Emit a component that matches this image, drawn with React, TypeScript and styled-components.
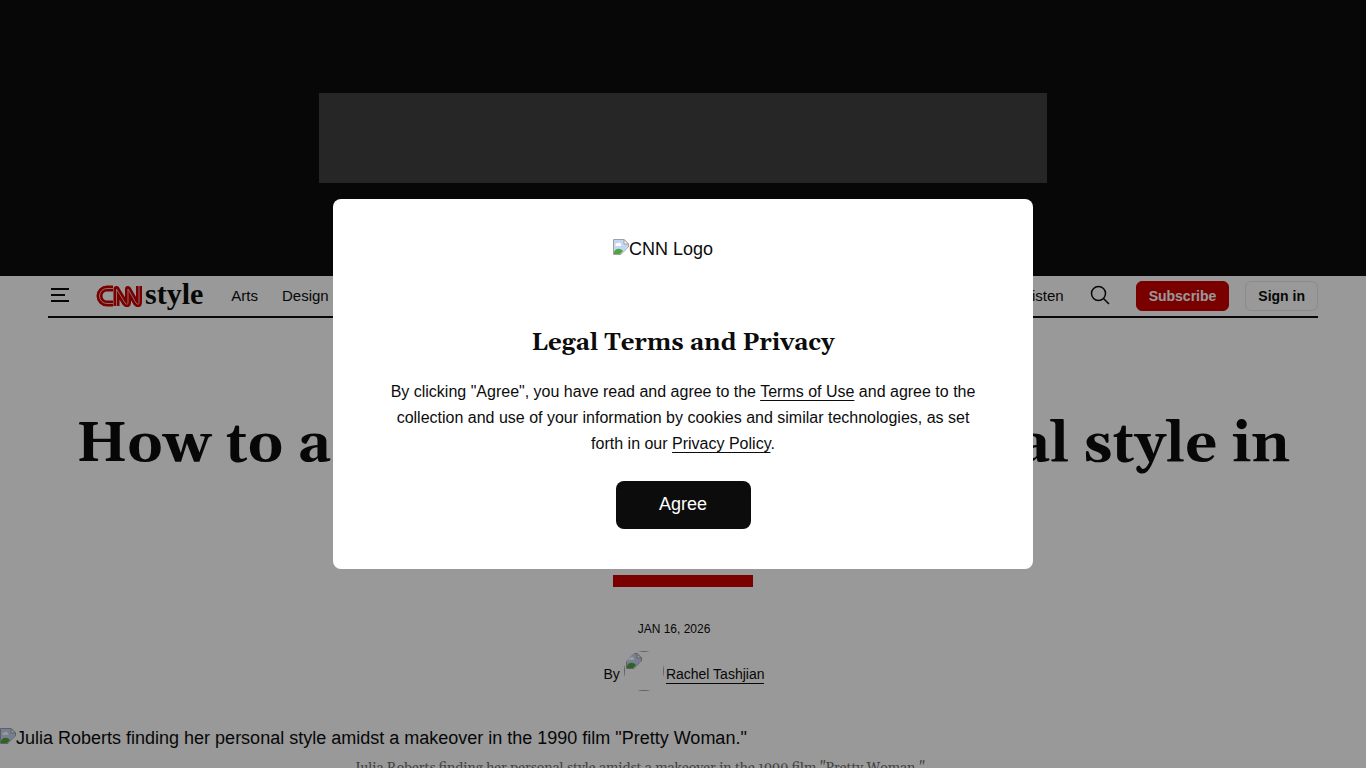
import React from "react";
import styled, { createGlobalStyle } from "styled-components";

const sans = `"Liberation Sans", Arial, Helvetica, sans-serif`;
const serif = `Georgia, Gelasio, "Liberation Serif", serif`;

const GlobalStyle = createGlobalStyle`
  *, *::before, *::after { box-sizing: border-box; }
  body {
    margin: 0;
    background: #fff;
    color: #0c0c0c;
    font-family: ${sans};
    font-size: 18px;
  }
`;

const Page = styled.div`
  height: 100vh;
  overflow: hidden;
`;

const AdBanner = styled.aside`
  display: flex;
  align-items: center;
  justify-content: center;
  height: 276px;
  background: #0c0c0c;
`;

const AdSlot = styled.div`
  width: 728px;
  height: 90px;
  background: #404040;
`;

const Header = styled.header`
  display: flex;
  align-items: center;
  height: 42px;
  margin: 0 48px;
  border-bottom: 2px solid #0c0c0c;
`;

const IconButton = styled.button`
  display: flex;
  padding: 0;
  border: 0;
  background: none;
  color: #0c0c0c;
  cursor: pointer;
`;

const Brand = styled.a`
  display: flex;
  align-items: center;
  gap: 3px;
  margin: 0 28px 0 24px;
  color: #0c0c0c;
  text-decoration: none;
`;

const BrandName = styled.span`
  padding-bottom: 4px;
  font: bold 30px/34px "Liberation Serif", serif;
`;

const Nav = styled.nav`
  display: flex;
  flex: 1;
  gap: 24px;
  min-width: 0;
`;

const NavLink = styled.a<{ $end?: boolean }>`
  margin-left: ${(p) => (p.$end ? "auto" : "0")};
  color: #0c0c0c;
  font-size: 15px;
  line-height: 20px;
  text-decoration: none;
`;

const Actions = styled.div`
  display: flex;
  align-items: center;
  gap: 16px;
  margin-left: 24px;
`;

const SearchButton = styled(IconButton)`
  margin-right: 8px;
`;

const AccountButton = styled.button<{ $primary?: boolean }>`
  height: 30px;
  padding: 0 12px;
  border: 1px solid ${(p) => (p.$primary ? "#cc0000" : "#e6e6e6")};
  border-radius: 6px;
  background: ${(p) => (p.$primary ? "#cc0000" : "#fff")};
  color: ${(p) => (p.$primary ? "#fff" : "#0c0c0c")};
  font: bold 14px/20px ${sans};
  white-space: nowrap;
  cursor: pointer;
`;

const Article = styled.article`
  display: flex;
  flex-direction: column;
  align-items: center;
  padding-top: 92px;
`;

const Headline = styled.h1`
  margin: 0;
  padding: 0 48px;
  font: bold 56px/70px ${serif};
  text-align: center;
`;

const Rule = styled.div`
  width: 140px;
  height: 12px;
  margin-top: 25px;
  background: #cc0000;
`;

const Dateline = styled.time`
  margin-top: 34px;
  padding-right: 18px;
  font-size: 12px;
  line-height: 16px;
  text-transform: uppercase;
`;

const Byline = styled.div`
  display: flex;
  align-items: center;
  margin-top: 14px;
  padding-left: 2px;
  font-size: 14px;
  line-height: 18px;
`;

const Avatar = styled.span`
  width: 40px;
  height: 40px;
  margin: 0 2px 0 4px;
  overflow: hidden;
  border-radius: 50%;
`;

const AvatarFrame = styled.span`
  display: block;
  height: 100%;
  padding: 1px;
  border: 1px solid #a0a0a0;
`;

const BylineText = styled.span`
  margin-top: 6px;
`;

const AuthorLink = styled.a`
  margin-top: 6px;
  border-bottom: 1px solid #0c0c0c;
  color: #0c0c0c;
  text-decoration: none;
`;

const Figure = styled.figure`
  align-self: stretch;
  margin: 37px 0 0;
`;

const Missing = styled.div`
  display: flex;
  align-items: flex-start;
  line-height: 21px;
  white-space: nowrap;
`;

const Caption = styled.figcaption`
  max-width: 660px;
  margin: 9px auto 0;
  color: #6e6e6e;
  font: 14px/20px ${serif};
`;

const Overlay = styled.div`
  position: fixed;
  inset: 0;
  display: flex;
  align-items: center;
  justify-content: center;
  background: rgba(0, 0, 0, 0.4);
`;

const Dialog = styled.section`
  display: flex;
  flex-direction: column;
  align-items: center;
  width: 700px;
  max-width: 100%;
  padding: 40px 50px;
  border-radius: 8px;
  background: #fff;
`;

const DialogLogo = styled.div`
  width: 140px;
  height: 63px;
`;

const DialogTitle = styled.h2`
  margin: 25px 0 20px;
  font: bold 24px/32px ${serif};
`;

const DialogText = styled.p`
  margin: 0 0 24px;
  font-size: 16px;
  line-height: 26px;
  text-align: center;

  a {
    color: #0c0c0c;
    text-decoration: underline;
    text-decoration-thickness: 1px;
    text-decoration-skip-ink: none;
    text-underline-offset: 3px;
  }
`;

const AgreeButton = styled.button`
  width: 135px;
  height: 48px;
  padding: 0 0 2px;
  border: 0;
  border-radius: 8px;
  background: #0c0c0c;
  color: #fff;
  font: 18px/24px ${sans};
  cursor: pointer;
`;

const BrokenImage = () => (
  <svg width="16" height="16" viewBox="0 0 16 16" aria-hidden="true">
    <path d="M.5 15.5V.5H11L15.5 5V8L8 15.5Z" fill="#c4d6f4" stroke="#a0a0a0" />
    <path d="M11 .5V5h4.5Z" fill="#fff" stroke="#a0a0a0" />
    <path d="M2.5 6.5a1.5 1.5 0 0 1 2-2 2 2 0 0 1 3.500 1 1 1 0 0 1 0 1.500H3Z" fill="#fff" />
    <path d="M1 15v-2c2-4 6-4 9-1l-3 3Z" fill="#4fa53a" />
    <path d="M8 16 16 8v3l-5 5Z" fill="#fff" />
  </svg>
);

const worm = "M17 3.500H11A7.500 7.500 0 0 0 11 18.500H17M20.500 21V4L29 18Q32 21 32 17V4L40 18Q43 21 43 17V1";

const CnnMark = () => (
  <svg width="46" height="22" viewBox="0 0 46 22" aria-label="CNN" role="img">
    <g fill="none" strokeLinejoin="round">
      <path d={worm} stroke="#cc0000" strokeWidth="6" />
      <path d={worm} stroke="#f0b4b4" strokeWidth="1" />
    </g>
  </svg>
);

export default function App() {
  return (
    <>
      <GlobalStyle />
      <Page>
        <AdBanner aria-label="Advertisement">
          <AdSlot />
        </AdBanner>
        <Header>
          <IconButton aria-label="Open menu">
            <svg width="24" height="24" viewBox="0 0 24 24" fill="none" stroke="currentColor" strokeWidth="2">
              <path d="M3 5H21M3 11H17M3 17H21" />
            </svg>
          </IconButton>
          <Brand href="#">
            <CnnMark />
            <BrandName>style</BrandName>
          </Brand>
          <Nav>
            <NavLink href="#">Arts</NavLink>
            <NavLink href="#">Design</NavLink>
            <NavLink href="#" $end>
              Listen
            </NavLink>
          </Nav>
          <Actions>
            <SearchButton aria-label="Search">
              <svg width="24" height="24" viewBox="0 0 24 24" fill="none" stroke="currentColor" strokeWidth="1.5">
                <circle cx="10.500" cy="9.500" r="7" />
                <path d="M15.500 14.500 21 20" />
              </svg>
            </SearchButton>
            <AccountButton $primary>Subscribe</AccountButton>
            <AccountButton>Sign in</AccountButton>
          </Actions>
        </Header>
        <Article>
          <Headline>How to actually find your personal style in 2026</Headline>
          <Rule />
          <Dateline dateTime="2026-01-16">Jan 16, 2026</Dateline>
          <Byline>
            <BylineText>By</BylineText>
            <Avatar>
              <AvatarFrame>
                <BrokenImage />
              </AvatarFrame>
            </Avatar>
            <AuthorLink href="#">Rachel Tashjian</AuthorLink>
          </Byline>
          <Figure>
            <Missing>
              <BrokenImage />
              Julia Roberts finding her personal style amidst a makeover in the 1990 film "Pretty Woman."
            </Missing>
            <Caption>
              Julia Roberts finding her personal style amidst a makeover in the 1990 film "Pretty Woman."
            </Caption>
          </Figure>
        </Article>
      </Page>
      <Overlay>
        <Dialog role="dialog" aria-modal="true" aria-labelledby="legal-title">
          <DialogLogo>
            <Missing>
              <BrokenImage />
              CNN Logo
            </Missing>
          </DialogLogo>
          <DialogTitle id="legal-title">Legal Terms and Privacy</DialogTitle>
          <DialogText>
            By clicking "Agree", you have read and agree to the <a href="#">Terms of Use</a> and agree to the
            collection and use of your information by cookies and similar technologies, as set forth in our{" "}
            <a href="#">Privacy Policy</a>.
          </DialogText>
          <AgreeButton>Agree</AgreeButton>
        </Dialog>
      </Overlay>
    </>
  );
}
